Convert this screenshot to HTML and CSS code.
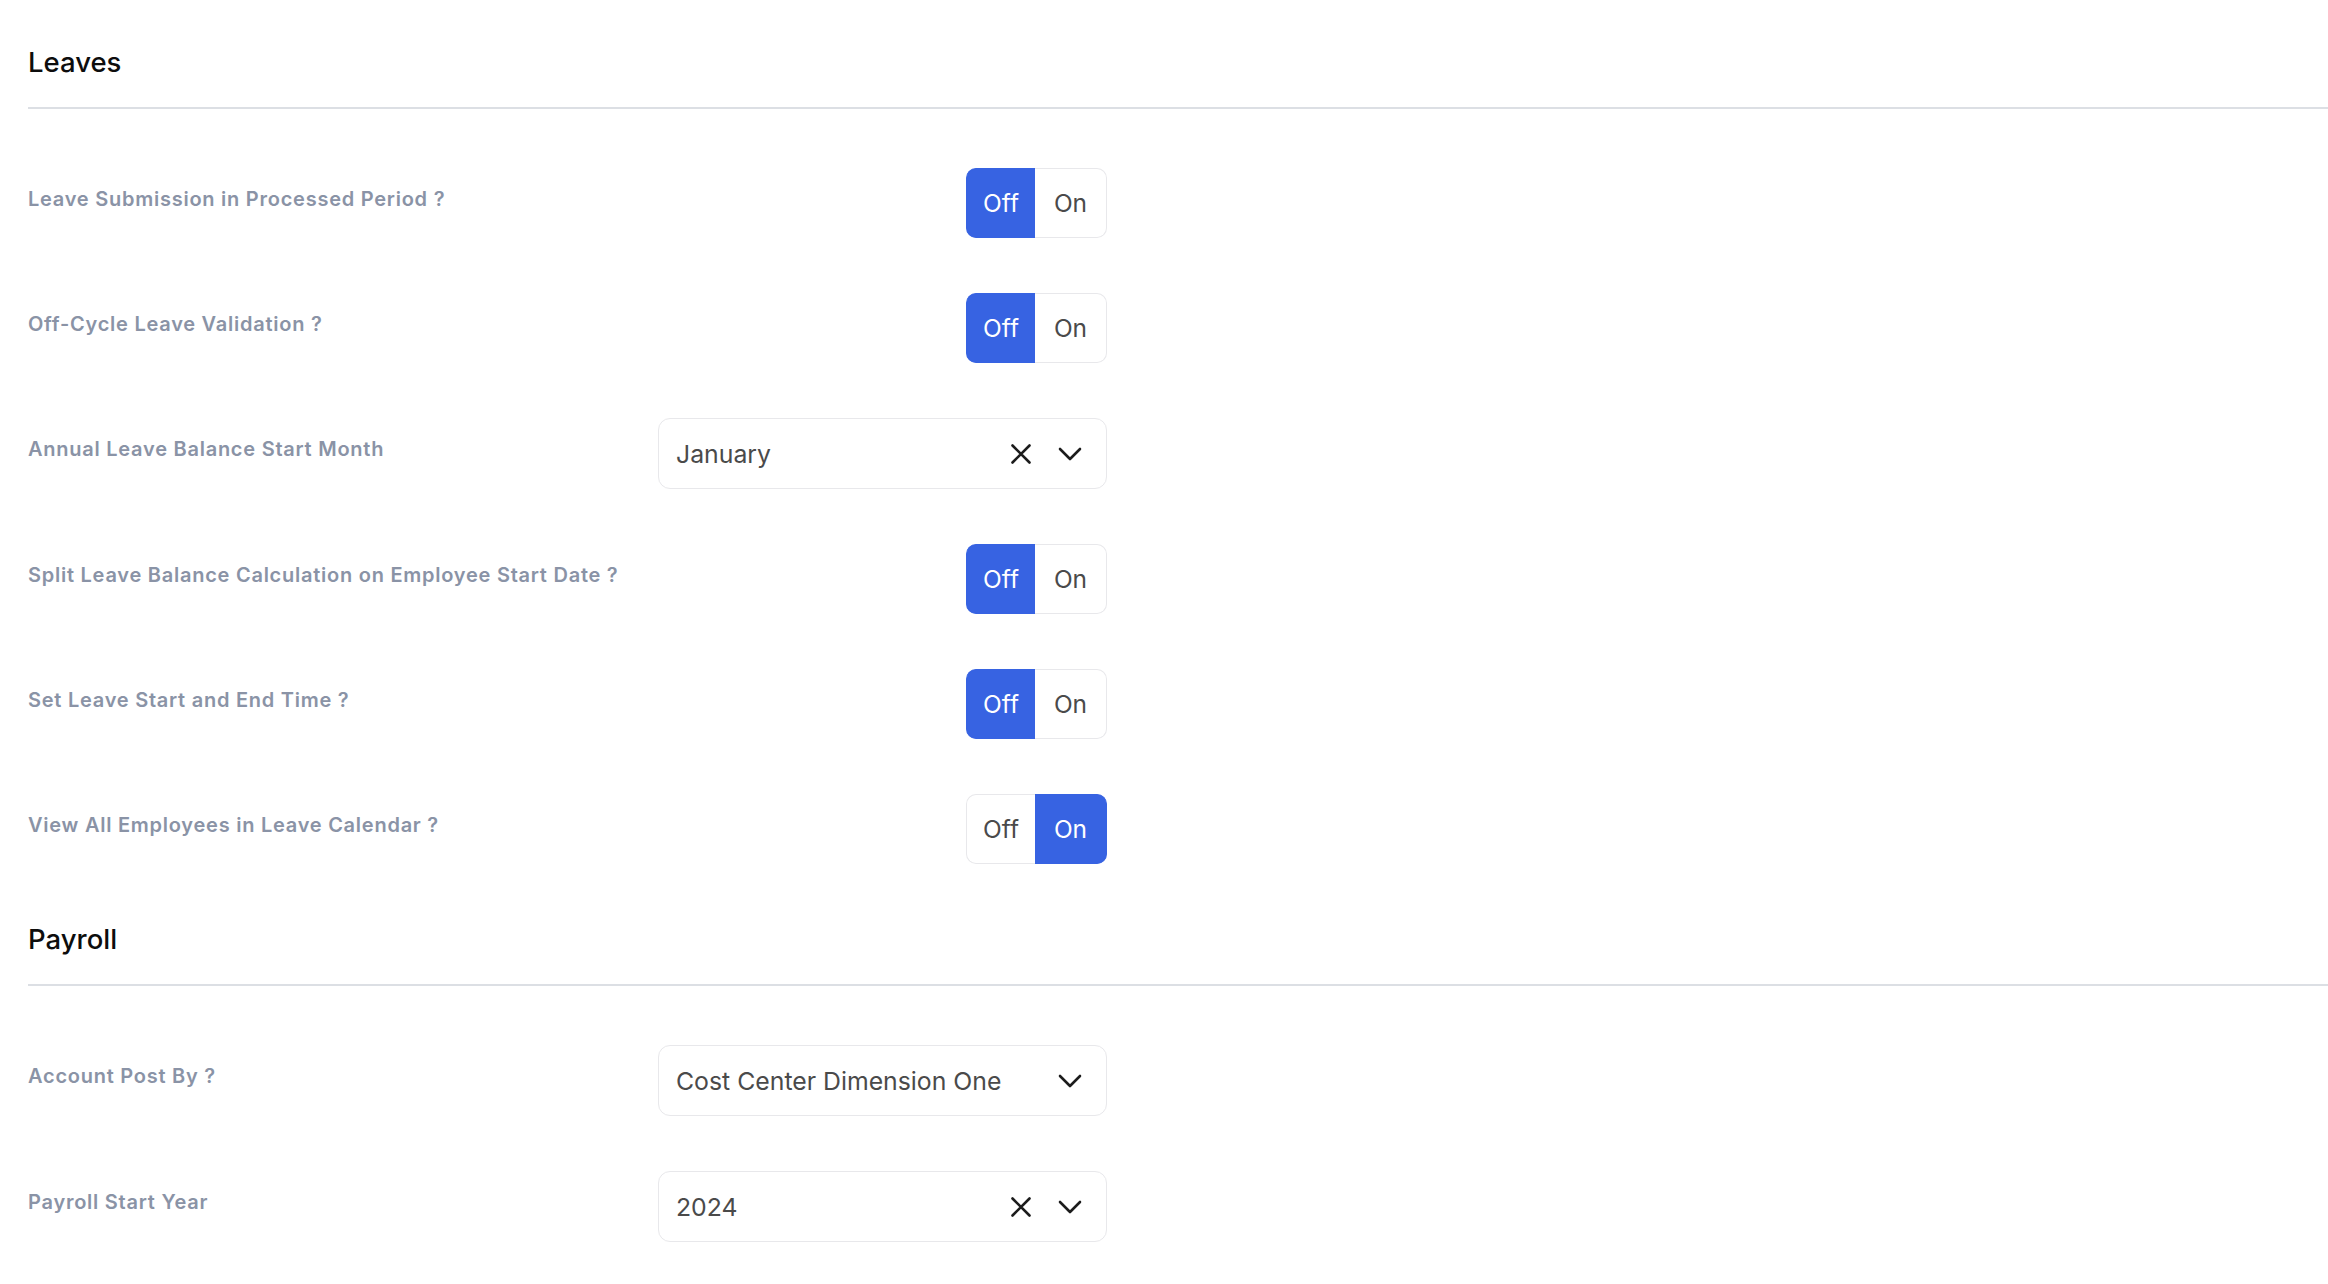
FILE: index.html
```html
<!DOCTYPE html>
<html lang="en">
<head>
<meta charset="utf-8">
<title>Settings</title>
<link rel="stylesheet" href="styles.css">
</head>
<body>
<main class="page">
  <section class="section">
    <h2 class="section-title">Leaves</h2>
    <div class="rows">
      <div class="label">Leave Submission in Processed Period ?</div>
      <div class="control">
        <div class="toggle"><span class="seg seg-left active">Off</span><span class="seg seg-right">On</span></div>
      </div>

      <div class="label">Off-Cycle Leave Validation ?</div>
      <div class="control">
        <div class="toggle"><span class="seg seg-left active">Off</span><span class="seg seg-right">On</span></div>
      </div>

      <div class="label">Annual Leave Balance Start Month</div>
      <div class="control">
        <div class="select">
          <span class="select-value">January</span>
          <span class="select-icons">
            <svg class="icon-x" width="20" height="20" viewBox="0 0 20 20"><path d="M1.5 1.5 L18.5 18.5 M18.5 1.5 L1.5 18.5" stroke="#1c1c1c" stroke-width="2.6" stroke-linecap="round" fill="none"/></svg>
            <svg class="icon-chev" width="24" height="14" viewBox="0 0 24 14"><path d="M2 2 L12 12 L22 2" stroke="#1c1c1c" stroke-width="2.6" stroke-linecap="round" stroke-linejoin="round" fill="none"/></svg>
          </span>
        </div>
      </div>

      <div class="label">Split Leave Balance Calculation on Employee Start Date ?</div>
      <div class="control">
        <div class="toggle"><span class="seg seg-left active">Off</span><span class="seg seg-right">On</span></div>
      </div>

      <div class="label">Set Leave Start and End Time ?</div>
      <div class="control">
        <div class="toggle"><span class="seg seg-left active">Off</span><span class="seg seg-right">On</span></div>
      </div>

      <div class="label">View All Employees in Leave Calendar ?</div>
      <div class="control">
        <div class="toggle"><span class="seg seg-left">Off</span><span class="seg seg-right active">On</span></div>
      </div>
    </div>
  </section>

  <section class="section">
    <h2 class="section-title">Payroll</h2>
    <div class="rows">
      <div class="label">Account Post By ?</div>
      <div class="control">
        <div class="select">
          <span class="select-value">Cost Center Dimension One</span>
          <span class="select-icons">
            <svg class="icon-chev" width="24" height="14" viewBox="0 0 24 14"><path d="M2 2 L12 12 L22 2" stroke="#1c1c1c" stroke-width="2.6" stroke-linecap="round" stroke-linejoin="round" fill="none"/></svg>
          </span>
        </div>
      </div>

      <div class="label">Payroll Start Year</div>
      <div class="control">
        <div class="select">
          <span class="select-value">2024</span>
          <span class="select-icons">
            <svg class="icon-x" width="20" height="20" viewBox="0 0 20 20"><path d="M1.5 1.5 L18.5 18.5 M18.5 1.5 L1.5 18.5" stroke="#1c1c1c" stroke-width="2.6" stroke-linecap="round" fill="none"/></svg>
            <svg class="icon-chev" width="24" height="14" viewBox="0 0 24 14"><path d="M2 2 L12 12 L22 2" stroke="#1c1c1c" stroke-width="2.6" stroke-linecap="round" stroke-linejoin="round" fill="none"/></svg>
          </span>
        </div>
      </div>
    </div>
  </section>
</main>
</body>
</html>
```

FILE: styles.css
```css
html, body {
  margin: 0;
  padding: 0;
  background: #ffffff;
}

body {
  font-family: Inter, "Noto Sans", "Liberation Sans", sans-serif;
  color: #111111;
}

.page {
  padding: 44px 0 0 28px;
}

.section-title {
  margin: 0;
  font-size: 27.5px;
  font-weight: 500;
  line-height: 36px;
  color: #0d0d0d;
  padding-bottom: 27px;
  border-bottom: 2px solid #dcdfe4;
}

.section + .section .section-title {
  margin-top: 1px;
}

.rows {
  display: grid;
  grid-template-columns: 630px 449px;
  row-gap: 55px;
  padding: 59px 0 56px;
  align-items: start;
}

.label {
  padding-top: 19px;
  font-size: 20px;
  line-height: 24px;
  font-weight: 600;
  letter-spacing: 0.75px;
  color: #8a93a6;
}

.control {
  display: flex;
  justify-content: flex-end;
}

.toggle {
  display: flex;
  height: 70px;
}

.seg {
  width: 69px;
  box-sizing: border-box;
  display: flex;
  align-items: center;
  justify-content: center;
  font-size: 24.5px;
  color: #4a4a4a;
  border: 1px solid #e8e8eb;
  background: #ffffff;
}

.seg-left {
  border-right: none;
  border-radius: 10px 0 0 10px;
}

.seg-right {
  width: 72px;
  border-left: none;
  border-radius: 0 10px 10px 0;
}

.seg.active {
  background: #3763e2;
  border-color: #3763e2;
  color: #ffffff;
}

.select {
  width: 449px;
  height: 71px;
  box-sizing: border-box;
  border: 1px solid #e8e8eb;
  border-radius: 12px;
  display: flex;
  align-items: center;
  padding: 0 24px 0 17px;
}

.select-value {
  font-size: 24.8px;
  color: #4a4a4a;
  flex: 1;
}

.select-icons {
  display: flex;
  align-items: center;
  gap: 27px;
}

.icon-x, .icon-chev {
  display: block;
}
```
